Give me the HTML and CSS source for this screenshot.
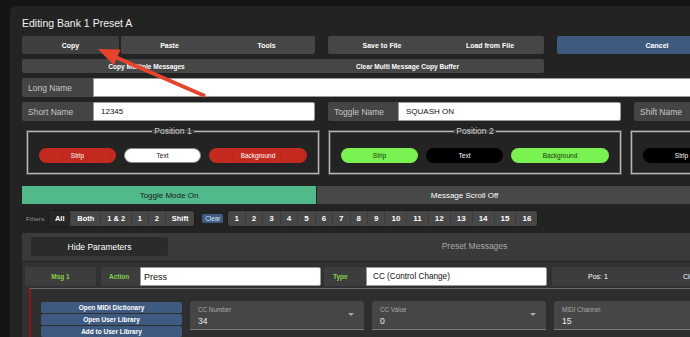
FILE: index.html
```html
<!DOCTYPE html>
<html>
<head>
<meta charset="utf-8">
<link rel="stylesheet" href="styles.css">
</head>
<body>
<div class="panel">
  <div class="title">Editing Bank 1 Preset A</div>

  <div class="row row-actions">
    <div class="g-edit">
      <button class="btn btn-copy">Copy</button>
      <div class="join">
        <button class="btn">Paste</button>
        <button class="btn">Tools</button>
      </div>
    </div>
    <div class="join g-file">
      <button class="btn">Save to File</button>
      <button class="btn">Load from File</button>
    </div>
    <button class="btn btn-cancel">Cancel</button>
  </div>

  <div class="row row-multi">
    <button class="btn btn-small">Copy Multiple Messages</button>
    <button class="btn btn-small">Clear Multi Message Copy Buffer</button>
  </div>

  <div class="row row-field">
    <span class="field-label">Long Name</span>
    <span class="text-input input-long"></span>
  </div>

  <div class="row row-field">
    <div class="name-field">
      <span class="field-label">Short Name</span>
      <span class="text-input">12345</span>
    </div>
    <div class="name-field">
      <span class="field-label">Toggle Name</span>
      <span class="text-input">SQUASH ON</span>
    </div>
    <div class="name-field">
      <span class="field-label">Shift Name</span>
      <span class="text-input"></span>
    </div>
  </div>

  <div class="row row-positions">
    <fieldset class="pos">
      <legend>Position 1</legend>
      <span class="pill pill-red">Strip</span>
      <span class="pill pill-white">Text</span>
      <span class="pill pill-red pill-wide">Background</span>
    </fieldset>
    <fieldset class="pos">
      <legend>Position 2</legend>
      <span class="pill pill-green">Strip</span>
      <span class="pill pill-black">Text</span>
      <span class="pill pill-green pill-wide">Background</span>
    </fieldset>
    <fieldset class="pos">
      <legend>Position 3</legend>
      <span class="pill pill-black">Strip</span>
      <span class="pill pill-black">Text</span>
      <span class="pill pill-black pill-wide">Background</span>
    </fieldset>
  </div>

  <div class="row row-toggle">
    <button class="tbtn tbtn-on">Toggle Mode On</button>
    <button class="tbtn">Message Scroll Off</button>
    <button class="tbtn"></button>
  </div>

  <div class="row row-filters">
    <span class="filters-label">Filters</span>
    <div class="seg">
      <button class="seg-btn active">All</button>
      <button class="seg-btn">Both</button>
      <button class="seg-btn">1 &amp; 2</button>
      <button class="seg-btn">1</button>
      <button class="seg-btn">2</button>
      <button class="seg-btn">Shift</button>
    </div>
    <button class="clear-btn">Clear</button>
    <div class="seg seg-nums">
      <button class="seg-btn">1</button>
      <button class="seg-btn">2</button>
      <button class="seg-btn">3</button>
      <button class="seg-btn">4</button>
      <button class="seg-btn">5</button>
      <button class="seg-btn">6</button>
      <button class="seg-btn">7</button>
      <button class="seg-btn">8</button>
      <button class="seg-btn">9</button>
      <button class="seg-btn">10</button>
      <button class="seg-btn">11</button>
      <button class="seg-btn">12</button>
      <button class="seg-btn">13</button>
      <button class="seg-btn">14</button>
      <button class="seg-btn">15</button>
      <button class="seg-btn">16</button>
    </div>
  </div>

  <div class="msg-header">
    <button class="hide-btn">Hide Parameters</button>
    <span class="preset-title">Preset Messages</span>
  </div>

  <div class="msg-card">
    <div class="msg-row">
      <span class="msg-num">Msg 1</span>
      <span class="msg-label msg-label-action">Action</span>
      <span class="text-input msg-input msg-input-action">Press</span>
      <span class="msg-label msg-label-type">Type</span>
      <span class="text-input msg-input msg-input-type">CC (Control Change)</span>
      <div class="msg-pos"><span class="pos-text">Pos: 1</span><span class="pos-clear">Clear</span></div>
    </div>
    <div class="params">
      <div class="lib-col">
        <button class="lib-btn">Open MIDI Dictionary</button>
        <button class="lib-btn">Open User Library</button>
        <button class="lib-btn">Add to User Library</button>
      </div>
      <div class="select-field">
        <span class="sf-label">CC Number</span>
        <span class="sf-value">34</span>
        <span class="caret"></span>
      </div>
      <div class="select-field">
        <span class="sf-label">CC Value</span>
        <span class="sf-value">0</span>
        <span class="caret"></span>
      </div>
      <div class="select-field">
        <span class="sf-label">MIDI Channel</span>
        <span class="sf-value">15</span>
        <span class="caret"></span>
      </div>
    </div>
  </div>
</div>

<svg class="annotation" width="690" height="337" viewBox="0 0 690 337">
  <line x1="205" y1="96" x2="114" y2="56.5" stroke="#e5432b" stroke-width="4"/>
  <polygon points="98,49 120.6,49.6 113.8,65.2" fill="#e5432b"/>
</svg>
</body>
</html>
```

FILE: styles.css
```css
* { box-sizing: border-box; }

html, body {
  margin: 0;
  padding: 0;
  width: 690px;
  height: 337px;
  overflow: hidden;
  background: #151515;
  font-family: "Liberation Sans", Arial, sans-serif;
  position: relative;
}

button {
  font-family: inherit;
  border: none;
  margin: 0;
  padding: 0;
  cursor: pointer;
}

.panel {
  margin: 6px 0 0 10px;
  width: 800px;
  height: 340px;
  background: #232323;
  border-top-left-radius: 6px;
  padding: 11px 0 0 12px;
}

.title {
  font-size: 10.5px;
  line-height: 12px;
  color: #f2f2f2;
  height: 12px;
}

.row { display: flex; }
.row > *, .join > *, .g-edit > *, .name-field > *, .msg-row > *, .params > *, .seg > * { flex-shrink: 0; }

/* action buttons */
.row-actions { margin-top: 7px; height: 18px; }

.btn {
  height: 18px;
  background: #464646;
  color: #fff;
  font-size: 7px;
  font-weight: bold;
  border-radius: 2px;
}

.g-edit { display: flex; width: 293px; }
.btn-copy { width: 97px; background: #3f3f3f; margin-right: 2px; }
.join { display: flex; }
.join .btn { border-radius: 0; width: 97px; }
.join .btn:first-child { border-radius: 2px 0 0 2px; }
.join .btn:last-child { border-radius: 0 2px 2px 0; }
.g-file { margin-left: 13px; }
.g-file .btn { width: 108px; }
.btn-cancel {
  margin-left: 13px;
  width: 200px;
  background: #3f5a7f;
}

.row-multi { margin-top: 5px; height: 14px; width: 522px; }
.btn-small {
  height: 14px;
  width: 261px;
  font-size: 6.6px;
  padding-right: 12px;
  border-radius: 0;
}
.btn-small:first-child { border-radius: 2px 0 0 2px; }
.btn-small:last-child { border-radius: 0 2px 2px 0; }

/* name fields */
.row-field { margin-top: 5px; height: 19px; }

.field-label {
  display: flex;
  align-items: center;
  width: 71px;
  height: 19px;
  padding-left: 6px;
  background: #444;
  color: #c6c6c6;
  font-size: 8.5px;
  border-radius: 2px 0 0 2px;
}

.text-input {
  display: flex;
  align-items: center;
  height: 19px;
  background: #fff;
  color: #111;
  font-size: 8px;
  padding-left: 6px;
  border-radius: 0 2px 2px 0;
  border: 1px solid #9a9a9a;
}

.input-long { width: 700px; }

.name-field { display: flex; width: 293px; margin-right: 13px; }
.name-field .text-input { flex: 1 0 auto; padding-left: 7px; }
.name-field:nth-child(2) .field-label { width: 70px; }

/* positions */
.row-positions { margin-top: 5px; margin-left: 5px; }

.pos {
  margin: 0 10px 0 0;
  width: 292px;
  padding: 12px 11px 10px 11px;
  border: 1px solid #b4b4b4;
  box-shadow: 0 0 0 1px #555, inset 0 0 0 1px #4a4a4a;
  display: flex;
  gap: 8px;
  min-width: 0;
}

.pos legend {
  margin: 0 auto;
  padding: 0 2px;
  font-size: 8.5px;
  line-height: 10px;
  color: #cfcfcf;
}

.pill {
  display: flex;
  align-items: center;
  justify-content: center;
  width: 77px;
  height: 15px;
  border-radius: 8px;
  font-size: 6.5px;
  color: #fff;
  flex-shrink: 0;
}
.pill-wide { width: 98px; }
.pill-red {
  background: #c42a20 repeating-linear-gradient(90deg, rgba(0,0,0,0) 0 11px, rgba(0,0,0,0.06) 11px 12px);
}
.pill-white { background: #fff; color: #111; border: 1px solid #888; }
.pill-green { background: #7af252; color: #1a3a10; }
.pill-black { background: #000; color: #fff; }

/* toggle row */
.row-toggle { margin-top: 12px; height: 18px; }
.tbtn {
  width: 295px;
  height: 18px;
  background: #484848;
  color: #fff;
  font-size: 8px;
}
.tbtn-on { width: 294px; margin-right: 1px; background: #52b98b; color: #1b1b1b; }

/* filters */
.row-filters { margin-top: 6px; height: 17px; align-items: center; }
.filters-label {
  font-size: 6px;
  color: #9a9a9a;
  padding-left: 4px;
  width: 26px;
  letter-spacing: 0.3px;
}
.seg {
  display: flex;
  height: 17px;
  background: #474747;
  border: 1px solid #1c1c1c;
  border-radius: 3px;
  overflow: hidden;
}
.seg-btn {
  height: 15px;
  background: transparent;
  color: #fff;
  font-size: 7.5px;
  font-weight: bold;
  padding: 0 5.9px;
  border-right: 1px solid #3b3b3b;
}
.seg-btn:last-child { border-right: none; }
.seg-btn.active { background: #262626; border-radius: 2px; }
.seg-nums .seg-btn { font-size: 8px; padding: 0 6px; }

.clear-btn {
  margin-left: 7px;
  height: 9px;
  padding: 0 3px;
  background: #3f5a80;
  color: #dfe6f0;
  font-size: 6.3px;
  border-radius: 2px;
}
.seg-nums { margin-left: 4px; }

/* message header */
.msg-header {
  margin-top: 6px;
  height: 28px;
  width: 759px;
  background: #3a3a3a;
  display: flex;
  align-items: flex-start;
  padding: 4px 0 0 9px;
}
.hide-btn {
  width: 137px;
  height: 19px;
  background: #2b2b2b;
  color: #fff;
  font-size: 8.5px;
  border-radius: 2px;
  flex-shrink: 0;
}
.preset-title {
  flex: 1;
  text-align: center;
  line-height: 19px;
  font-size: 8.5px;
  color: #a8a8a8;
}

/* message card */
.msg-card {
  margin-top: 1px;
  background: #313131;
  width: 759px;
  height: 90px;
  padding: 5px 0 0 3px;
}
.msg-row { display: flex; height: 19px; }
.msg-num {
  width: 71px;
  height: 19px;
  background: #3d3d3d;
  border-radius: 2px;
  color: #86d04c;
  font-size: 6.5px;
  font-weight: bold;
  display: flex;
  align-items: center;
  justify-content: center;
}
.msg-label {
  height: 19px;
  background: #3d3d3d;
  border-radius: 2px 0 0 2px;
  color: #86d04c;
  font-size: 6.5px;
  font-weight: bold;
  display: flex;
  align-items: center;
  padding-left: 8px;
}
.msg-label-action { width: 39px; margin-left: 5px; }
.msg-label-type { width: 42px; margin-left: 3px; padding-left: 9px; }
.msg-input { width: 181px; }
.msg-input-action { font-size: 9px; padding-left: 3px; }
.msg-input-type { font-size: 8.2px; padding-left: 6px; }
.msg-pos {
  margin-left: 5px;
  width: 200px;
  height: 19px;
  background: #3d3d3d;
  border-radius: 2px;
  display: flex;
  align-items: center;
  color: #fff;
  font-size: 7px;
}
.pos-text { width: 92px; text-align: center; }
.pos-clear { margin-left: 39px; }

.params {
  margin: 2px 0 0 4px;
  border-top: 1px solid #6c6c6c;
  border-left: 2px solid #8c1818;
  background: #2e2e2e;
  height: 60px;
  padding: 12px 0 0 10px;
  display: flex;
  align-items: flex-start;
}
.lib-col {
  width: 141px;
  margin-right: 8px;
  margin-top: 1px;
  display: flex;
  flex-direction: column;
  gap: 1px;
}
.lib-btn {
  height: 11px;
  background: #3f5a80;
  color: #fff;
  font-size: 6.5px;
  font-weight: bold;
  border-radius: 2px;
}
.select-field {
  position: relative;
  width: 174px;
  height: 29px;
  margin-right: 8px;
  background: #464646;
  border-radius: 3px 3px 0 0;
  border-bottom: 1px solid #7c7c7c;
  padding: 5px 0 0 8px;
  display: flex;
  flex-direction: column;
}
.sf-label { font-size: 6.3px; color: #a9a9a9; line-height: 8px; }
.sf-value { font-size: 8.5px; color: #eee; line-height: 12px; margin-top: 1px; }
.caret {
  position: absolute;
  right: 10px;
  top: 12px;
  width: 0;
  height: 0;
  border-left: 3px solid transparent;
  border-right: 3px solid transparent;
  border-top: 3px solid #a8a8a8;
}

.annotation {
  position: absolute;
  left: 0;
  top: 0;
  pointer-events: none;
}
```
